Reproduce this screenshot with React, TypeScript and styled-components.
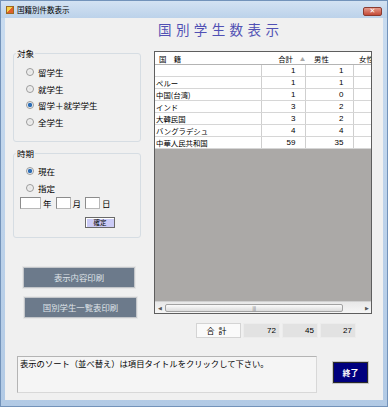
import styled, { createGlobalStyle } from "styled-components";

const GlobalStyle = createGlobalStyle`
  html, body {
    margin: 0;
    padding: 0;
    background: #ffffff;
  }
  body {
    font-family: "Noto Sans CJK JP", "Liberation Sans", sans-serif;
    color: #000;
  }
`;

const Window = styled.div`
  width: 388px;
  height: 407px;
  box-sizing: border-box;
  display: flex;
  flex-direction: column;
  background: linear-gradient(#c9dcf0, #b2cae5);
  border: 1px solid #7393ba;
`;

const TitleBar = styled.div`
  height: 17px;
  display: flex;
  align-items: center;
  padding-left: 5px;
  background: linear-gradient(#d3e2f2, #bcd2ea);
`;

const AppIcon = styled.span`
  width: 8px;
  height: 8px;
  display: inline-block;
  background: linear-gradient(135deg, #f7d24a 0 50%, #e0602a 50% 100%);
  border: 1px solid #9a6a20;
  box-sizing: border-box;
`;

const Title = styled.span`
  margin-left: 3px;
  font-size: 7.5px;
  line-height: 10px;
`;

const CloseButton = styled.span`
  margin-left: auto;
  margin-right: 5px;
  align-self: flex-start;
  margin-top: 6px;
  width: 19px;
  height: 9px;
  border-radius: 2px;
  border: 1px solid #8a3b30;
  box-sizing: border-box;
  background: linear-gradient(#e59a8c, #c44a36);
  color: #fff;
  font-size: 7px;
  line-height: 7px;
  text-align: center;
  font-family: "DejaVu Sans", sans-serif;
  font-weight: bold;
`;

const Client = styled.div`
  flex: 1;
  margin: 0 4px 6px 4px;
  background: #f0f0f0;
  padding-left: 8px;
  display: flex;
  flex-direction: column;
`;

const Upper = styled.div`
  display: flex;
  gap: 13px;
`;

const LeftCol = styled.div`
  width: 128px;
  padding-top: 31px;
  display: flex;
  flex-direction: column;
`;

const RightCol = styled.div`
  width: 218px;
  display: flex;
  flex-direction: column;
`;

const Group = styled.fieldset<{ $top?: number }>`
  margin: ${(p) => p.$top ?? 0}px 0 0 0;
  padding: 0;
  border: 1px solid #d6dde3;
  border-radius: 3px;
  min-width: 0;
`;

const Legend = styled.legend`
  padding: 0 1px;
  margin-left: 2px;
  font-size: 8.5px;
  line-height: 9px;
`;

const GroupBody = styled.div<{ $pad: string }>`
  padding: ${(p) => p.$pad};
  display: flex;
  flex-direction: column;
`;

const RadioRow = styled.div`
  height: 16.5px;
  display: flex;
  align-items: center;
  gap: 4px;
  font-size: 8.5px;
`;

const RadioDot = styled.span<{ $checked?: boolean }>`
  width: 8px;
  height: 8px;
  border-radius: 50%;
  box-sizing: border-box;
  border: 1px solid #9a9a9a;
  background: ${(p) =>
    p.$checked
      ? "radial-gradient(circle, #2f6eb5 0 1.8px, #8fb6de 2.2px, #f4f4f4 2.6px)"
      : "radial-gradient(circle, #e2e2e2, #fafafa)"};
`;

const DateRow = styled.div`
  margin: 1px 0 0 6px;
  height: 12px;
  display: flex;
  align-items: center;
  font-size: 8.5px;
`;

const DateBox = styled.span<{ $w: number }>`
  width: ${(p) => p.$w}px;
  height: 12px;
  box-sizing: border-box;
  background: #fff;
  border: 1px solid #b8b8b8;
  border-top-color: #8c8c8c;
  border-left-color: #8c8c8c;
`;

const DateUnit = styled.span<{ $gap: number }>`
  margin: 0 ${(p) => p.$gap}px 0 2px;
  line-height: 12px;
`;

const SmallButton = styled.div`
  margin: 8px 0 0 71px;
  width: 30px;
  height: 11px;
  box-sizing: border-box;
  background: #cbcbf6;
  border: 1px solid #6a6a6a;
  box-shadow: inset 1px 1px 0 #fff;
  font-size: 6.5px;
  line-height: 9px;
  text-align: center;
`;

const SlateButton = styled.div<{ $top: number; $left: number; $w: number }>`
  margin: ${(p) => p.$top}px 0 0 ${(p) => p.$left}px;
  width: ${(p) => p.$w}px;
  height: 21px;
  box-sizing: border-box;
  background: #6c7a8b;
  border: 1px solid #c3c6ca;
  box-shadow: 0 0 0 1px #e6e6e6;
  color: #dfe3e8;
  font-size: 8.4px;
  line-height: 19px;
  text-align: center;
`;

const Heading = styled.div`
  height: 22px;
  line-height: 22px;
  padding-left: 4px;
  font-size: 13.5px;
  letter-spacing: 4.4px;
  color: #5050b4;
  white-space: nowrap;
`;

const Grid = styled.div`
  margin-top: 11px;
  height: 263px;
  box-sizing: border-box;
  border: 1px solid #5e5e5e;
  display: flex;
  flex-direction: column;
  overflow: hidden;
`;

const GridBody = styled.div`
  flex: 1;
  background: #aba9a7;
  overflow: hidden;
`;

const DataTable = styled.table`
  border-collapse: collapse;
  table-layout: fixed;
  width: 258px;
  font-size: 7.4px;
`;

const HeadCell = styled.th<{ $align?: string; $pl?: number }>`
  height: 12px;
  padding: 0 0 0 ${(p) => p.$pl ?? 4}px;
  background: #ffffff;
  border-bottom: 1px solid #b4b4b4;
  font-weight: normal;
  text-align: ${(p) => p.$align ?? "left"};
  white-space: nowrap;
  overflow: hidden;
  line-height: 11px;
`;

const SortMark = styled.span`
  color: #a8a8a8;
  font-size: 5px;
  margin-left: 7px;
  vertical-align: 1px;
`;

const Cell = styled.td<{ $num?: boolean }>`
  height: 11px;
  padding: ${(p) => (p.$num ? "0 9px 0 0" : "0 0 0 1px")};
  background: #ffffff;
  border-right: 1px solid #cfcfcf;
  border-bottom: 1px solid #d6d6d6;
  text-align: ${(p) => (p.$num ? "right" : "left")};
  font-family: ${(p) =>
    p.$num ? '"Liberation Sans Narrow", "Liberation Sans", sans-serif' : "inherit"};
  font-size: ${(p) => (p.$num ? "8px" : "7.4px")};
  line-height: 11px;
  white-space: nowrap;
  overflow: hidden;
`;

const HScroll = styled.div`
  height: 11px;
  display: flex;
  align-items: center;
  background: linear-gradient(#e8e8e8, #f6f6f6);
  border-top: 1px solid #d0d0d0;
`;

const ScrollArrow = styled.span<{ $w?: number; $end?: boolean }>`
  width: ${(p) => p.$w ?? 10}px;
  margin-left: ${(p) => (p.$end ? "auto" : "0")};
  font-size: 5px;
  color: #555;
  text-align: center;
  font-family: "DejaVu Sans", sans-serif;
`;

const Thumb = styled.div`
  width: 178px;
  height: 8px;
  box-sizing: border-box;
  border: 1px solid #a2a2a2;
  border-radius: 2px;
  background: linear-gradient(#fbfbfb, #dcdcdc);
  display: flex;
  align-items: center;
  justify-content: center;
  font-size: 5px;
  color: #777;
  font-family: "DejaVu Sans", sans-serif;
  letter-spacing: -0.5px;
`;

const Totals = styled.div`
  margin: 9px 0 0 42px;
  height: 15px;
  display: flex;
  gap: 2px;
  font-size: 8px;
`;

const TotalCell = styled.div<{ $w: number; $label?: boolean }>`
  width: ${(p) => p.$w}px;
  box-sizing: border-box;
  border: 1px solid ${(p) => (p.$label ? "#d4d4d4" : "#ececec")};
  background: ${(p) => (p.$label ? "#fafafa" : "#e2e2e2")};
  text-align: ${(p) => (p.$label ? "center" : "right")};
  padding-right: ${(p) => (p.$label ? 0 : 3)}px;
  line-height: 13px;
  letter-spacing: ${(p) => (p.$label ? "4px" : "0")};
  font-family: ${(p) =>
    p.$label ? "inherit" : '"Liberation Sans Narrow", "Liberation Sans", sans-serif'};
`;

const Footer = styled.div`
  margin-top: 18px;
  padding-left: 4px;
  display: flex;
  align-items: flex-start;
`;

const MessageBox = styled.div`
  width: 300px;
  height: 37px;
  box-sizing: border-box;
  background: #f5f5f5;
  border: 1px solid #d8d8d8;
  border-top-color: #b4b4b4;
  border-left-color: #b4b4b4;
  padding: 1px 2px;
  font-size: 8.3px;
  line-height: 11px;
  white-space: nowrap;
`;

const ExitButton = styled.div`
  margin: 6px 0 0 16px;
  width: 35px;
  height: 21px;
  box-sizing: border-box;
  background: #00007e;
  border: 1px solid #2a2a2a;
  box-shadow: 0 0 0 1px #c8c8c8;
  color: #ffffff;
  font-weight: bold;
  font-size: 8px;
  line-height: 19px;
  text-align: center;
`;

// 女性の列は表示幅の外にあるので値は見えない
const rows: [string, number, number][] = [
  ["", 1, 1],
  ["ペルー", 1, 1],
  ["中国(台湾)", 1, 0],
  ["インド", 3, 2],
  ["大韓民国", 3, 2],
  ["バングラデシュ", 4, 4],
  ["中華人民共和国", 59, 35],
];

export default function App() {
  return (
    <>
      <GlobalStyle />
      <Window>
        <TitleBar>
          <AppIcon />
          <Title>国籍別件数表示</Title>
          <CloseButton>✕</CloseButton>
        </TitleBar>
        <Client>
          <Upper>
            <LeftCol>
              <Group>
                <Legend>対象</Legend>
                <GroupBody $pad="6px 0 11px 12px">
                  <RadioRow>
                    <RadioDot />
                    留学生
                  </RadioRow>
                  <RadioRow>
                    <RadioDot />
                    就学生
                  </RadioRow>
                  <RadioRow>
                    <RadioDot $checked />
                    留学＋就学学生
                  </RadioRow>
                  <RadioRow>
                    <RadioDot />
                    全学生
                  </RadioRow>
                </GroupBody>
              </Group>
              <Group $top={7}>
                <Legend>時期</Legend>
                <GroupBody $pad="5px 0 0 12px">
                  <RadioRow>
                    <RadioDot $checked />
                    現在
                  </RadioRow>
                  <RadioRow>
                    <RadioDot />
                    指定
                  </RadioRow>
                </GroupBody>
                <GroupBody $pad="0 0 9px 0">
                  <DateRow>
                    <DateBox $w={21} />
                    <DateUnit $gap={4}>年</DateUnit>
                    <DateBox $w={15} />
                    <DateUnit $gap={4}>月</DateUnit>
                    <DateBox $w={15} />
                    <DateUnit $gap={0}>日</DateUnit>
                  </DateRow>
                  <SmallButton>確定</SmallButton>
                </GroupBody>
              </Group>
              <SlateButton $top={29} $left={10} $w={112}>
                表示内容印刷
              </SlateButton>
              <SlateButton $top={9} $left={11} $w={113}>
                国別学生一覧表印刷
              </SlateButton>
            </LeftCol>
            <RightCol>
              <Heading>国別学生数表示</Heading>
              <Grid>
                <GridBody>
                  <DataTable>
                    <colgroup>
                      <col style={{ width: 106 }} />
                      <col style={{ width: 44 }} />
                      <col style={{ width: 48 }} />
                      <col style={{ width: 60 }} />
                    </colgroup>
                    <thead>
                      <tr>
                        <HeadCell>国　籍</HeadCell>
                        <HeadCell $align="right">
                          合計<SortMark>▲</SortMark>
                        </HeadCell>
                        <HeadCell $pl={9}>男性</HeadCell>
                        <HeadCell $pl={6}>女性</HeadCell>
                      </tr>
                    </thead>
                    <tbody>
                      {rows.map((r, i) => (
                        <tr key={i}>
                          <Cell>{r[0]}</Cell>
                          <Cell $num>{r[1]}</Cell>
                          <Cell $num>{r[2]}</Cell>
                          <Cell $num />
                        </tr>
                      ))}
                    </tbody>
                  </DataTable>
                </GridBody>
                <HScroll>
                  <ScrollArrow>◀</ScrollArrow>
                  <Thumb>|||</Thumb>
                  <ScrollArrow $end $w={8}>
                    ▶
                  </ScrollArrow>
                </HScroll>
              </Grid>
              <Totals>
                <TotalCell $w={45} $label>
                  合計
                </TotalCell>
                <TotalCell $w={37}>72</TotalCell>
                <TotalCell $w={36}>45</TotalCell>
                <TotalCell $w={36}>27</TotalCell>
              </Totals>
            </RightCol>
          </Upper>
          <Footer>
            <MessageBox>
              表示のソート（並べ替え）は項目タイトルをクリックして下さい。
            </MessageBox>
            <ExitButton>終了</ExitButton>
          </Footer>
        </Client>
      </Window>
    </>
  );
}
